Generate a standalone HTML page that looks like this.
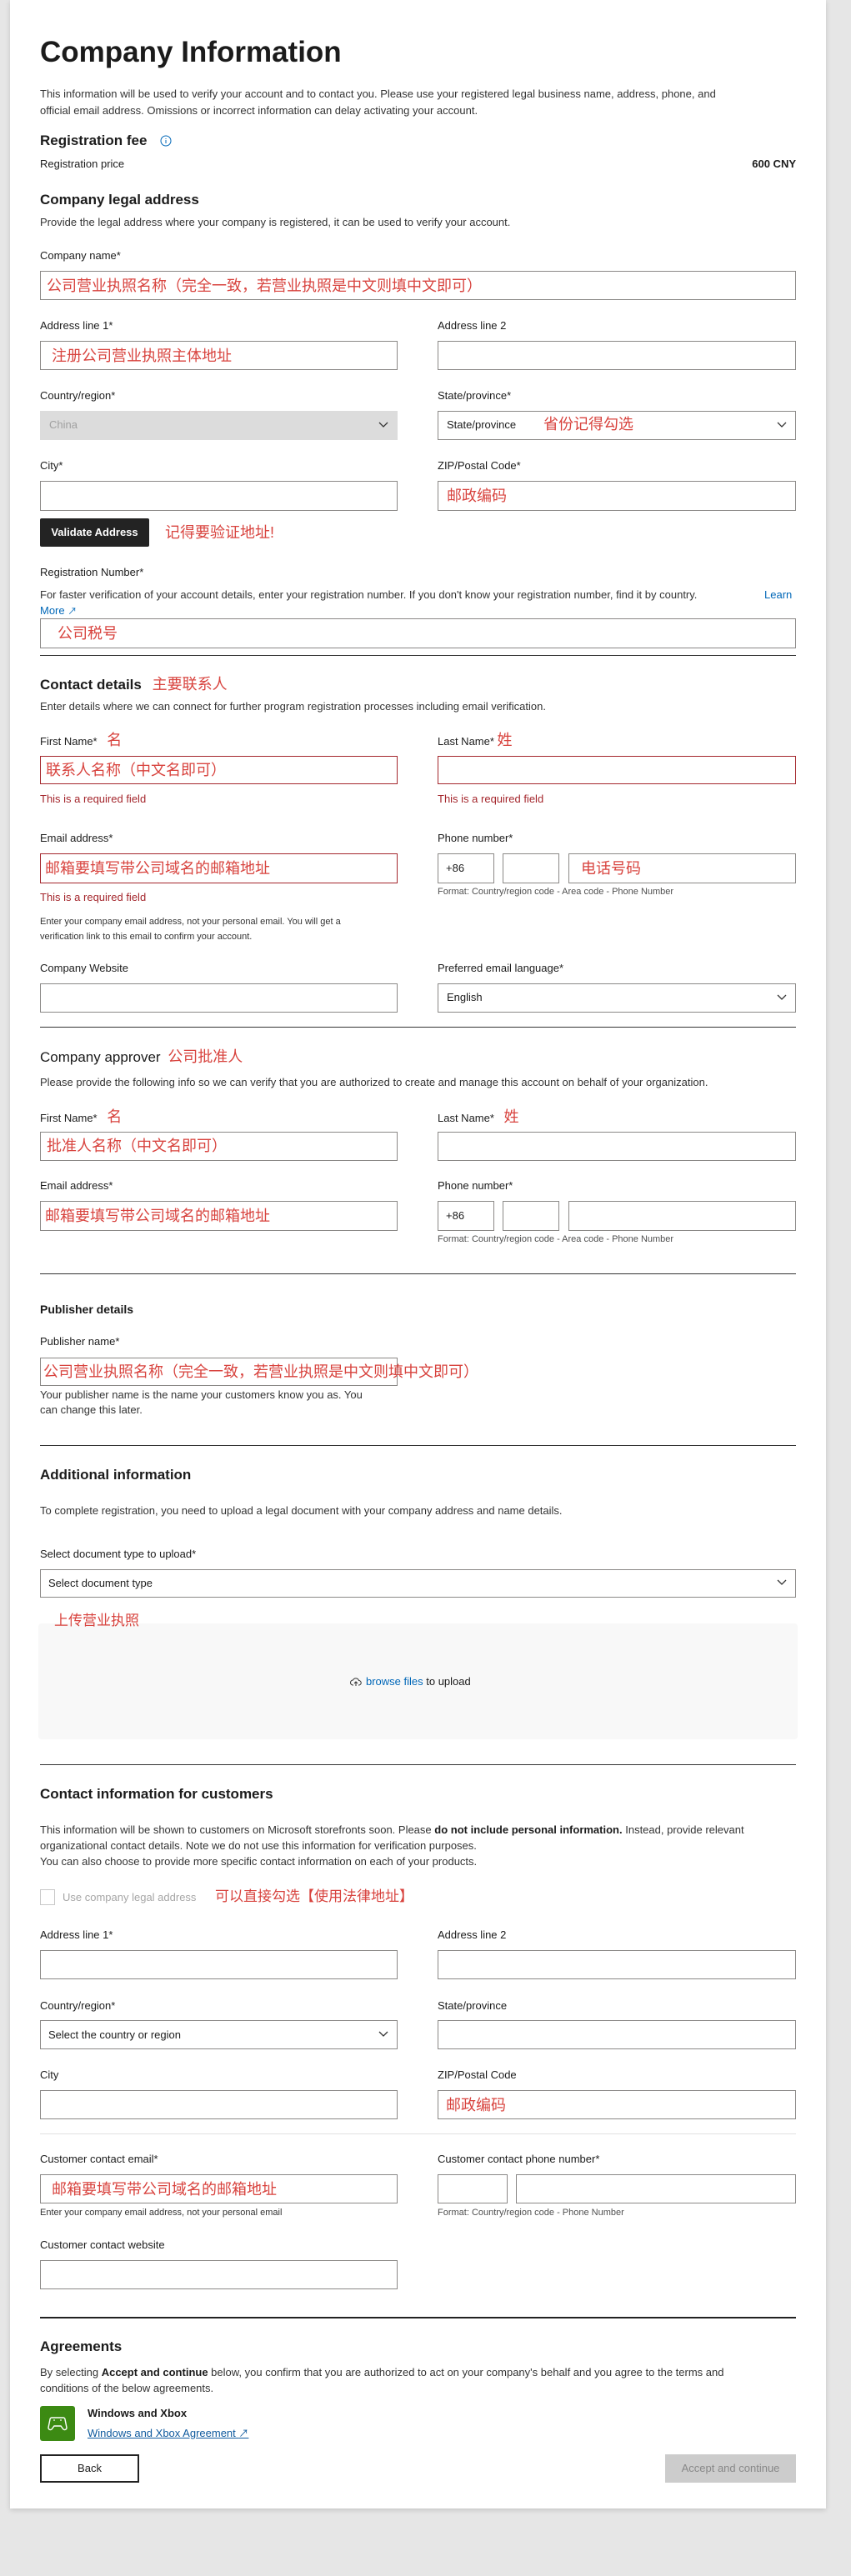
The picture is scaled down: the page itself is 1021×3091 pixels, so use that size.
<!DOCTYPE html>
<html><head><meta charset="utf-8"><style>
*{margin:0;padding:0;box-sizing:border-box}
body{width:1021px;height:3091px;background:#e6e6e6;font-family:"Liberation Sans","Noto Sans CJK SC",sans-serif;color:#1b1b1b;position:relative;overflow:hidden}
.card{position:absolute;left:12px;top:0;width:979px;height:3010px;background:#fff;box-shadow:0 2px 6px rgba(0,0,0,.15)}
.a{position:absolute;white-space:nowrap;line-height:20px}
.s{font-size:13px}
.xs{font-size:11px;color:#505050}
.h2{font-size:17px;font-weight:bold}
.h3{font-size:15px;font-weight:bold}
.cn{color:#d8433e;font-size:18px}
.err{color:#a4262c;font-size:13px}
.box{position:absolute;border:1px solid #8a8886;background:#fff}
.red{border-color:#a4262c}
.hr{position:absolute;left:48px;width:907px;height:1px;background:#333}
.chev{position:absolute;right:10px;top:50%;margin-top:-5px}
</style></head><body>
<div class="card"></div>

<div class="a" style="left:48px;top:42px;font-size:35px;font-weight:bold;line-height:42px">Company Information</div>
<div class="a s" style="left:48px;top:103px;color:#333">This information will be used to verify your account and to contact you. Please use your registered legal business name, address, phone, and</div>
<div class="a s" style="left:48px;top:123px;color:#333">official email address. Omissions or incorrect information can delay activating your account.</div>

<div class="a h2" style="left:48px;top:159px">Registration fee</div>
<svg style="position:absolute;left:192px;top:162px" width="14" height="14" viewBox="0 0 14 14"><circle cx="7" cy="7" r="6" fill="none" stroke="#0067b8" stroke-width="1"/><path d="M7 6v4M7 4v1" stroke="#0067b8" stroke-width="1"/></svg>
<div class="a s" style="left:48px;top:187px">Registration price</div>
<div class="a s" style="right:66px;top:187px;font-weight:bold">600 CNY</div>

<div class="a h2" style="left:48px;top:230px">Company legal address</div>
<div class="a s" style="left:48px;top:257px;color:#333">Provide the legal address where your company is registered, it can be used to verify your account.</div>

<div class="a s" style="left:48px;top:297px">Company name*</div>
<div class="box" style="left:48px;top:325px;width:907px;height:35px"></div>
<div class="a cn" style="left:56px;top:333px">公司营业执照名称（完全一致，若营业执照是中文则填中文即可）</div>

<div class="a s" style="left:48px;top:381px">Address line 1*</div>
<div class="a s" style="left:525px;top:381px">Address line 2</div>
<div class="box" style="left:48px;top:409px;width:429px;height:35px"></div>
<div class="a cn" style="left:62px;top:417px">注册公司营业执照主体地址</div>
<div class="box" style="left:525px;top:409px;width:430px;height:35px"></div>

<div class="a s" style="left:48px;top:465px">Country/region*</div>
<div class="a s" style="left:525px;top:465px">State/province*</div>
<div class="box" style="left:48px;top:493px;width:429px;height:35px;background:#dcdcdc;border-color:#dcdcdc"><svg class="chev" width="12" height="8" viewBox="0 0 12 8"><path d="M1 1l5 5 5-5" fill="none" stroke="#333" stroke-width="1.3"/></svg></div>
<div class="a s" style="left:59px;top:500px;color:#a0a0a0">China</div>
<div class="box" style="left:525px;top:493px;width:430px;height:35px"><svg class="chev" width="12" height="8" viewBox="0 0 12 8"><path d="M1 1l5 5 5-5" fill="none" stroke="#333" stroke-width="1.3"/></svg></div>
<div class="a s" style="left:536px;top:500px">State/province</div>
<div class="a cn" style="left:652px;top:499px">省份记得勾选</div>

<div class="a s" style="left:48px;top:549px">City*</div>
<div class="a s" style="left:525px;top:549px">ZIP/Postal Code*</div>
<div class="box" style="left:48px;top:577px;width:429px;height:36px"></div>
<div class="box" style="left:525px;top:577px;width:430px;height:36px"></div>
<div class="a cn" style="left:536px;top:585px">邮政编码</div>

<div style="position:absolute;left:48px;top:622px;width:131px;height:34px;background:#232323;border-radius:2px;color:#fff;font-size:13px;font-weight:bold;line-height:34px;text-align:center">Validate Address</div>
<div class="a cn" style="left:198px;top:629px">记得要验证地址!</div>

<div class="a s" style="left:48px;top:677px">Registration Number*</div>
<div class="a s" style="left:48px;top:704px;color:#333">For faster verification of your account details, enter your registration number. If you don't know your registration number, find it by country.</div>
<div class="a s" style="left:917px;top:704px;color:#0067b8">Learn</div>
<div class="a s" style="left:48px;top:723px;color:#0067b8">More <span style="font-size:11px">&#x2197;</span></div>
<div class="box" style="left:48px;top:742px;width:907px;height:36px"></div>
<div class="a cn" style="left:69px;top:750px">公司税号</div>
<div class="hr" style="top:786px"></div>

<div class="a h2" style="left:48px;top:811px">Contact details <span class="cn" style="font-weight:normal;margin-left:8px">主要联系人</span></div>
<div class="a s" style="left:48px;top:838px;color:#333">Enter details where we can connect for further program registration processes including email verification.</div>

<div class="a s" style="left:48px;top:878px">First Name* <span class="cn" style="margin-left:8px">名</span></div>
<div class="a s" style="left:525px;top:878px">Last Name* <span class="cn">姓</span></div>
<div class="box red" style="left:48px;top:907px;width:429px;height:34px"></div>
<div class="a cn" style="left:55px;top:914px">联系人名称（中文名即可）</div>
<div class="box red" style="left:525px;top:907px;width:430px;height:34px"></div>
<div class="a err" style="left:48px;top:949px">This is a required field</div>
<div class="a err" style="left:525px;top:949px">This is a required field</div>

<div class="a s" style="left:48px;top:996px">Email address*</div>
<div class="a s" style="left:525px;top:996px">Phone number*</div>
<div class="box red" style="left:48px;top:1024px;width:429px;height:36px"></div>
<div class="a cn" style="left:54px;top:1032px">邮箱要填写带公司域名的邮箱地址</div>
<div class="box" style="left:525px;top:1024px;width:68px;height:36px"></div>
<div class="a s" style="left:535px;top:1032px">+86</div>
<div class="box" style="left:603px;top:1024px;width:68px;height:36px"></div>
<div class="box" style="left:682px;top:1024px;width:273px;height:36px"></div>
<div class="a cn" style="left:697px;top:1032px">电话号码</div>
<div class="a xs" style="left:525px;top:1060px">Format: Country/region code - Area code - Phone Number</div>
<div class="a err" style="left:48px;top:1067px">This is a required field</div>
<div class="a" style="left:48px;top:1096px;font-size:11px;color:#333">Enter your company email address, not your personal email. You will get a</div>
<div class="a" style="left:48px;top:1114px;font-size:11px;color:#333">verification link to this email to confirm your account.</div>

<div class="a s" style="left:48px;top:1152px">Company Website</div>
<div class="a s" style="left:525px;top:1152px">Preferred email language*</div>
<div class="box" style="left:48px;top:1180px;width:429px;height:35px"></div>
<div class="box" style="left:525px;top:1180px;width:430px;height:35px"><svg class="chev" width="12" height="8" viewBox="0 0 12 8"><path d="M1 1l5 5 5-5" fill="none" stroke="#333" stroke-width="1.3"/></svg></div>
<div class="a s" style="left:536px;top:1187px">English</div>
<div class="hr" style="top:1232px"></div>

<div class="a" style="left:48px;top:1258px;font-size:17px">Company approver <span class="cn" style="margin-left:4px">公司批准人</span></div>
<div class="a s" style="left:48px;top:1289px;color:#333">Please provide the following info so we can verify that you are authorized to create and manage this account on behalf of your organization.</div>
<div class="a s" style="left:48px;top:1330px">First Name* <span class="cn" style="margin-left:8px">名</span></div>
<div class="a s" style="left:525px;top:1330px">Last Name* <span class="cn" style="margin-left:8px">姓</span></div>
<div class="box" style="left:48px;top:1358px;width:429px;height:35px"></div>
<div class="a cn" style="left:56px;top:1365px">批准人名称（中文名即可）</div>
<div class="box" style="left:525px;top:1358px;width:430px;height:35px"></div>

<div class="a s" style="left:48px;top:1413px">Email address*</div>
<div class="a s" style="left:525px;top:1413px">Phone number*</div>
<div class="box" style="left:48px;top:1441px;width:429px;height:36px"></div>
<div class="a cn" style="left:54px;top:1449px">邮箱要填写带公司域名的邮箱地址</div>
<div class="box" style="left:525px;top:1441px;width:68px;height:36px"></div>
<div class="a s" style="left:535px;top:1449px">+86</div>
<div class="box" style="left:603px;top:1441px;width:68px;height:36px"></div>
<div class="box" style="left:682px;top:1441px;width:273px;height:36px"></div>
<div class="a xs" style="left:525px;top:1477px">Format: Country/region code - Area code - Phone Number</div>
<div class="hr" style="top:1528px"></div>

<div class="a h3" style="left:48px;top:1561px;font-size:14px">Publisher details</div>
<div class="a s" style="left:48px;top:1600px">Publisher name*</div>
<div class="box" style="left:48px;top:1629px;width:429px;height:34px;background:transparent"></div>
<div class="a cn" style="left:52px;top:1636px">公司营业执照名称（完全一致，若营业执照是中文则填中文即可）</div>
<div class="a s" style="left:48px;top:1664px;color:#333">Your publisher name is the name your customers know you as. You</div>
<div class="a s" style="left:48px;top:1682px;color:#333">can change this later.</div>
<div class="hr" style="top:1734px"></div>

<div class="a h2" style="left:48px;top:1760px">Additional information</div>
<div class="a s" style="left:48px;top:1803px;color:#333">To complete registration, you need to upload a legal document with your company address and name details.</div>
<div class="a s" style="left:48px;top:1855px">Select document type to upload*</div>
<div class="box" style="left:48px;top:1883px;width:907px;height:34px"><svg class="chev" width="12" height="8" viewBox="0 0 12 8"><path d="M1 1l5 5 5-5" fill="none" stroke="#333" stroke-width="1.3"/></svg></div>
<div class="a s" style="left:58px;top:1890px">Select document type</div>
<div style="position:absolute;left:46px;top:1948px;width:911px;height:139px;background:#f8f8f8;border-radius:4px"></div>
<div class="a cn" style="left:65px;top:1935px;font-size:17px">上传营业执照</div>
<svg style="position:absolute;left:420px;top:2012px" width="14" height="12" viewBox="0 0 14 12"><path d="M4 10H3.5A3 3 0 0 1 3.5 4 3.8 3.8 0 0 1 10.5 4.5 2.7 2.7 0 0 1 10.5 10H10M7 11V6M5 8l2-2 2 2" fill="none" stroke="#333" stroke-width="1"/></svg>
<div class="a s" style="left:439px;top:2008px"><span style="color:#0067b8">browse files</span> to upload</div>
<div class="hr" style="top:2117px"></div>

<div class="a h2" style="left:48px;top:2143px">Contact information for customers</div>
<div class="a s" style="left:48px;top:2186px;color:#333">This information will be shown to customers on Microsoft storefronts soon. Please <b style="color:#1b1b1b">do not include personal information.</b> Instead, provide relevant</div>
<div class="a s" style="left:48px;top:2205px;color:#333">organizational contact details. Note we do not use this information for verification purposes.</div>
<div class="a s" style="left:48px;top:2224px;color:#333">You can also choose to provide more specific contact information on each of your products.</div>
<div style="position:absolute;left:48px;top:2267px;width:18px;height:19px;border:1px solid #c8c8c8"></div>
<div class="a s" style="left:75px;top:2267px;color:#a6a6a6">Use company legal address</div>
<div class="a cn" style="left:258px;top:2266px;font-size:17px">可以直接勾选【使用法律地址】</div>

<div class="a s" style="left:48px;top:2312px">Address line 1*</div>
<div class="a s" style="left:525px;top:2312px">Address line 2</div>
<div class="box" style="left:48px;top:2340px;width:429px;height:35px"></div>
<div class="box" style="left:525px;top:2340px;width:430px;height:35px"></div>
<div class="a s" style="left:48px;top:2397px">Country/region*</div>
<div class="a s" style="left:525px;top:2397px">State/province</div>
<div class="box" style="left:48px;top:2424px;width:429px;height:35px"><svg class="chev" width="12" height="8" viewBox="0 0 12 8"><path d="M1 1l5 5 5-5" fill="none" stroke="#333" stroke-width="1.3"/></svg></div>
<div class="a s" style="left:58px;top:2432px">Select the country or region</div>
<div class="box" style="left:525px;top:2424px;width:430px;height:35px"></div>
<div class="a s" style="left:48px;top:2480px">City</div>
<div class="a s" style="left:525px;top:2480px">ZIP/Postal Code</div>
<div class="box" style="left:48px;top:2508px;width:429px;height:35px"></div>
<div class="box" style="left:525px;top:2508px;width:430px;height:35px"></div>
<div class="a cn" style="left:535px;top:2516px">邮政编码</div>
<div class="hr" style="top:2560px;background:#e1e1e1"></div>

<div class="a s" style="left:48px;top:2581px">Customer contact email*</div>
<div class="a s" style="left:525px;top:2581px">Customer contact phone number*</div>
<div class="box" style="left:48px;top:2609px;width:429px;height:35px"></div>
<div class="a cn" style="left:62px;top:2617px">邮箱要填写带公司域名的邮箱地址</div>
<div class="box" style="left:525px;top:2609px;width:84px;height:35px"></div>
<div class="box" style="left:619px;top:2609px;width:336px;height:35px"></div>
<div class="a" style="left:48px;top:2645px;font-size:11px;color:#333">Enter your company email address, not your personal email</div>
<div class="a xs" style="left:525px;top:2645px">Format: Country/region code - Phone Number</div>
<div class="a s" style="left:48px;top:2684px">Customer contact website</div>
<div class="box" style="left:48px;top:2712px;width:429px;height:35px"></div>
<div class="hr" style="top:2780px;height:2px;background:#222"></div>

<div class="a h2" style="left:48px;top:2806px">Agreements</div>
<div class="a s" style="left:48px;top:2837px;color:#333">By selecting <b style="color:#1b1b1b">Accept and continue</b> below, you confirm that you are authorized to act on your company's behalf and you agree to the terms and</div>
<div class="a s" style="left:48px;top:2856px;color:#333">conditions of the below agreements.</div>
<div style="position:absolute;left:48px;top:2887px;width:42px;height:42px;background:#3c8a13;border-radius:3px"></div>
<svg style="position:absolute;left:57px;top:2899px" width="24" height="18" viewBox="0 0 24 18"><path d="M5 2h14a2 2 0 0 1 2 2l2 10a2.5 2.5 0 0 1-4 2l-3-4H8l-3 4a2.5 2.5 0 0 1-4-2L3 4a2 2 0 0 1 2-2z" fill="none" stroke="#fff" stroke-width="1.4"/><path d="M8 4v2M16 4v2" stroke="#fff" stroke-width="1.2"/></svg>
<div class="a" style="left:105px;top:2886px;font-size:13px;font-weight:bold">Windows and Xbox</div>
<div class="a s" style="left:105px;top:2910px;color:#0f5a9e;text-decoration:underline">Windows and Xbox Agreement <span style="text-decoration:none;font-size:12px">&#x2197;</span></div>
<div style="position:absolute;left:48px;top:2945px;width:119px;height:34px;border:2px solid #222;font-size:13px;line-height:30px;text-align:center">Back</div>
<div style="position:absolute;left:798px;top:2945px;width:157px;height:34px;background:#cccccc;color:#888;font-size:13px;line-height:34px;text-align:center">Accept and continue</div>
</body></html>
